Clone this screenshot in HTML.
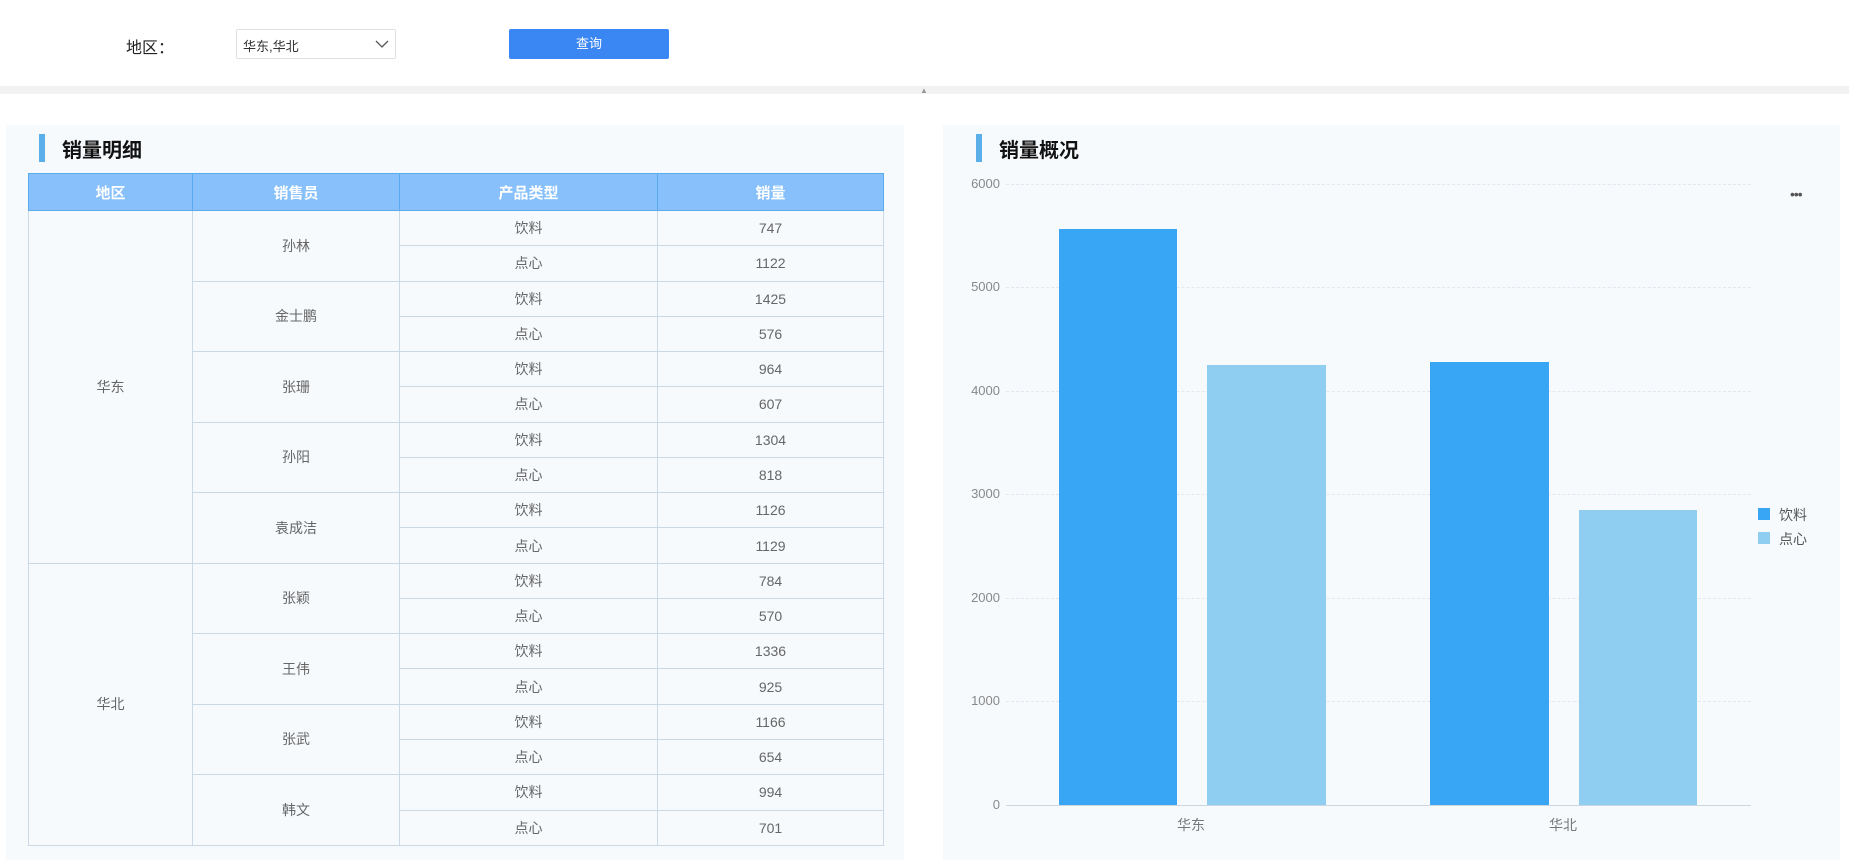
<!DOCTYPE html>
<html><head><meta charset="utf-8"><style>
*{margin:0;padding:0;box-sizing:border-box}
body{width:1849px;height:860px;background:#fff;position:relative;overflow:hidden;font-family:"Liberation Sans","Noto Sans CJK SC",sans-serif;color:#666}
.abs{position:absolute}
.panel{position:absolute;background:#f7fafd}
.bar{position:absolute;width:6px;background:#5aaeea}
.title{position:absolute;font-size:20px;font-weight:bold;color:#111}
table{position:absolute;left:28px;top:173px;width:855px;border-collapse:collapse;table-layout:fixed;font-size:14px}
th{background:#87c0fb;color:#fff;font-weight:bold;height:37px;border:1px solid #5aaaf0;font-size:15px}
td{border:1px solid #cbd9e6;height:35.28px;text-align:center;color:#666;background:#f7fafd}
.yl{position:absolute;left:960px;width:40px;text-align:right;font-size:13px;color:#888}
.grid{position:absolute;left:1006px;width:745px;border-top:1px dashed #e3e8ee}
.b{position:absolute}
</style></head><body>
<div class="abs" style="left:126px;top:34px;font-size:16px;color:#222">地区：</div>
<div class="abs" style="left:236px;top:29px;width:160px;height:30px;border:1px solid #dde0e4;border-radius:2px;font-size:13px;color:#333;padding:6px 6px">华东,华北
<svg class="abs" style="left:138px;top:9px" width="14" height="10" viewBox="0 0 14 10"><path d="M1 2 L7 8 L13 2" fill="none" stroke="#555" stroke-width="1.3"/></svg></div>
<div class="abs" style="left:509px;top:29px;width:160px;height:30px;background:#3a86f2;border-radius:2px;color:#fff;font-size:13px;text-align:center;line-height:30px">查询</div>
<div class="abs" style="left:0;top:86px;width:1849px;height:8px;background:#f2f2f2"></div>
<div class="abs" style="left:920px;top:86px;font-size:8px;color:#999">▲</div>

<div class="panel" style="left:6px;top:125px;width:898px;height:735px"></div>
<div class="bar" style="left:39px;top:134px;height:28px"></div>
<div class="title" style="left:62px;top:134px">销量明细</div>
<table>
<colgroup><col style="width:164px"><col style="width:207px"><col style="width:258px"><col style="width:226px"></colgroup>
<tr><th>地区</th><th>销售员</th><th>产品类型</th><th>销量</th></tr>
<tr><td rowspan="10">华东</td><td rowspan="2">孙林</td><td>饮料</td><td>747</td></tr><tr><td>点心</td><td>1122</td></tr>
<tr><td rowspan="2">金士鹏</td><td>饮料</td><td>1425</td></tr><tr><td>点心</td><td>576</td></tr>
<tr><td rowspan="2">张珊</td><td>饮料</td><td>964</td></tr><tr><td>点心</td><td>607</td></tr>
<tr><td rowspan="2">孙阳</td><td>饮料</td><td>1304</td></tr><tr><td>点心</td><td>818</td></tr>
<tr><td rowspan="2">袁成洁</td><td>饮料</td><td>1126</td></tr><tr><td>点心</td><td>1129</td></tr>
<tr><td rowspan="8">华北</td><td rowspan="2">张颖</td><td>饮料</td><td>784</td></tr><tr><td>点心</td><td>570</td></tr>
<tr><td rowspan="2">王伟</td><td>饮料</td><td>1336</td></tr><tr><td>点心</td><td>925</td></tr>
<tr><td rowspan="2">张武</td><td>饮料</td><td>1166</td></tr><tr><td>点心</td><td>654</td></tr>
<tr><td rowspan="2">韩文</td><td>饮料</td><td>994</td></tr><tr><td>点心</td><td>701</td></tr>
</table>

<div class="panel" style="left:943px;top:125px;width:897px;height:735px"></div>
<div class="bar" style="left:976px;top:134px;height:28px"></div>
<div class="title" style="left:999px;top:134px">销量概况</div>
<div class="abs" style="left:1790px;top:186px;font-size:14px;color:#555;letter-spacing:-1px">•••</div>

<div class="grid" style="top:184px"></div><div class="yl" style="top:176px">6000</div>
<div class="grid" style="top:287px"></div><div class="yl" style="top:279px">5000</div>
<div class="grid" style="top:391px"></div><div class="yl" style="top:383px">4000</div>
<div class="grid" style="top:494px"></div><div class="yl" style="top:486px">3000</div>
<div class="grid" style="top:598px"></div><div class="yl" style="top:590px">2000</div>
<div class="grid" style="top:701px"></div><div class="yl" style="top:693px">1000</div>
<div class="yl" style="top:797px">0</div>
<div class="abs" style="left:1006px;top:805px;width:745px;height:1px;background:#ccd6e0"></div>

<div class="b" style="left:1059px;top:229px;width:118px;height:576px;background:#38a6f5"></div>
<div class="b" style="left:1207px;top:365px;width:119px;height:440px;background:#8fcdf1"></div>
<div class="b" style="left:1430px;top:362px;width:119px;height:443px;background:#38a6f5"></div>
<div class="b" style="left:1579px;top:510px;width:118px;height:295px;background:#8fcdf1"></div>
<div class="abs" style="left:1177px;top:815px;font-size:14px;color:#777">华东</div>
<div class="abs" style="left:1549px;top:815px;font-size:14px;color:#777">华北</div>

<div class="abs" style="left:1758px;top:508px;width:12px;height:12px;background:#38a6f5"></div>
<div class="abs" style="left:1779px;top:505px;font-size:14px;color:#555">饮料</div>
<div class="abs" style="left:1758px;top:532px;width:12px;height:12px;background:#8fcdf1"></div>
<div class="abs" style="left:1779px;top:529px;font-size:14px;color:#555">点心</div>
</body></html>
